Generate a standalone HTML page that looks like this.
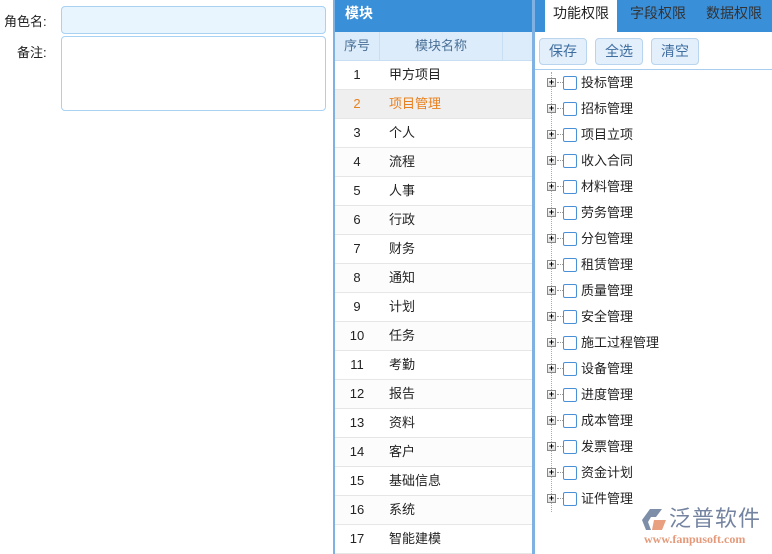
<!DOCTYPE html>
<html><head><meta charset="utf-8"><style>
*{margin:0;padding:0;box-sizing:border-box}
body{width:772px;height:554px;overflow:hidden;background:#fff;font-family:"Liberation Sans","Noto Sans CJK SC",sans-serif;font-size:13px;color:#222;position:relative}
.abs{position:absolute}
.lbl{position:absolute;font-size:13px;color:#222}
.row{position:absolute;left:335px;width:197px;height:29px;border-bottom:1px solid #e6e6e6;line-height:28px;font-size:13px}
.row .n{position:absolute;left:0;width:44px;text-align:center}
.row .t{position:absolute;left:54px}
.btn{position:absolute;top:38px;height:27px;border:1px solid #b8d4ee;border-radius:4px;background:#e3effb;color:#3e6da0;font-size:14px;line-height:25px;text-align:center}
.ti{position:absolute;left:547px;height:20px}
.ti .p{position:absolute;left:0;top:5px;width:9px;height:9px;border:1px solid #888;background:linear-gradient(#fff,#ddd);font-size:9px;line-height:7px;text-align:center;color:#000;font-weight:bold}
.ti .d{position:absolute;left:10px;top:9px;width:6px;border-top:1px dotted #999}
.ti .c{position:absolute;left:16px;top:3px;width:14px;height:14px;border:1px solid #4a90d6;border-radius:2px;background:#fff}
.ti .x{position:absolute;left:34px;top:0;font-size:13px;white-space:nowrap;line-height:20px}
</style></head><body>
<div class="lbl" style="left:4px;top:11px">角色名:</div>
<div class="abs" style="left:61px;top:6px;width:265px;height:28px;border:1px solid #a9d1f2;border-radius:4px;background:#e8f4fe"></div>
<div class="lbl" style="left:17px;top:42px">备注:</div>
<div class="abs" style="left:61px;top:36px;width:265px;height:75px;border:1px solid #a9d1f2;border-radius:4px;background:#fff"></div>

<div class="abs" style="left:333px;top:0;width:2px;height:554px;background:#7fb2e2"></div>
<div class="abs" style="left:532px;top:0;width:3px;height:554px;background:#7fb2e2"></div>
<div class="abs" style="left:335px;top:0;width:197px;height:32px;background:#3a8fd9;color:#fff;font-weight:bold;font-size:14px;line-height:26px;padding-left:10px">模块</div>
<div class="abs" style="left:335px;top:32px;width:197px;height:29px;background:#dcecfa;border-bottom:1px solid #c8def2;color:#4a6f96;font-size:13px;line-height:28px">
<span class="abs" style="left:0;width:44px;text-align:center">序号</span>
<span class="abs" style="left:44px;top:0;width:1px;height:28px;background:#c8def2"></span>
<span class="abs" style="left:45px;width:122px;text-align:center">模块名称</span>
<span class="abs" style="left:167px;top:0;width:1px;height:28px;background:#c8def2"></span>
</div>

<div class="row" style="top:61px"><span class="n">1</span><span class="t">甲方项目</span></div>
<div class="row" style="top:90px;background:#efefef;color:#e8801e"><span class="n">2</span><span class="t">项目管理</span></div>
<div class="row" style="top:119px"><span class="n">3</span><span class="t">个人</span></div>
<div class="row" style="top:148px;background:#fcfcfc"><span class="n">4</span><span class="t">流程</span></div>
<div class="row" style="top:177px"><span class="n">5</span><span class="t">人事</span></div>
<div class="row" style="top:206px;background:#fcfcfc"><span class="n">6</span><span class="t">行政</span></div>
<div class="row" style="top:235px"><span class="n">7</span><span class="t">财务</span></div>
<div class="row" style="top:264px;background:#fcfcfc"><span class="n">8</span><span class="t">通知</span></div>
<div class="row" style="top:293px"><span class="n">9</span><span class="t">计划</span></div>
<div class="row" style="top:322px;background:#fcfcfc"><span class="n">10</span><span class="t">任务</span></div>
<div class="row" style="top:351px"><span class="n">11</span><span class="t">考勤</span></div>
<div class="row" style="top:380px;background:#fcfcfc"><span class="n">12</span><span class="t">报告</span></div>
<div class="row" style="top:409px"><span class="n">13</span><span class="t">资料</span></div>
<div class="row" style="top:438px;background:#fcfcfc"><span class="n">14</span><span class="t">客户</span></div>
<div class="row" style="top:467px"><span class="n">15</span><span class="t">基础信息</span></div>
<div class="row" style="top:496px;background:#fcfcfc"><span class="n">16</span><span class="t">系统</span></div>
<div class="row" style="top:525px"><span class="n">17</span><span class="t">智能建模</span></div>

<div class="abs" style="left:535px;top:0;width:237px;height:32px;background:#3a8fd9"></div>
<div class="abs" style="left:545px;top:0;width:72px;height:32px;background:#fff;color:#222;font-size:14px;text-align:center;line-height:26px">功能权限</div>
<div class="abs" style="left:630px;top:0;color:#333;font-size:14px;line-height:26px">字段权限</div>
<div class="abs" style="left:706px;top:0;color:#333;font-size:14px;line-height:26px">数据权限</div>
<div class="abs" style="left:535px;top:32px;width:237px;height:38px;background:#fff;border-bottom:1px solid #a9cdee"></div>
<div class="btn" style="left:539px;width:48px">保存</div>
<div class="btn" style="left:595px;width:48px">全选</div>
<div class="btn" style="left:651px;width:48px">清空</div>
<div class="abs" style="left:551px;top:72px;height:440px;border-left:1px dotted #aaa"></div>

<div class="ti" style="top:73px"><span class="p">+</span><span class="d"></span><span class="c"></span><span class="x">投标管理</span></div>
<div class="ti" style="top:99px"><span class="p">+</span><span class="d"></span><span class="c"></span><span class="x">招标管理</span></div>
<div class="ti" style="top:125px"><span class="p">+</span><span class="d"></span><span class="c"></span><span class="x">项目立项</span></div>
<div class="ti" style="top:151px"><span class="p">+</span><span class="d"></span><span class="c"></span><span class="x">收入合同</span></div>
<div class="ti" style="top:177px"><span class="p">+</span><span class="d"></span><span class="c"></span><span class="x">材料管理</span></div>
<div class="ti" style="top:203px"><span class="p">+</span><span class="d"></span><span class="c"></span><span class="x">劳务管理</span></div>
<div class="ti" style="top:229px"><span class="p">+</span><span class="d"></span><span class="c"></span><span class="x">分包管理</span></div>
<div class="ti" style="top:255px"><span class="p">+</span><span class="d"></span><span class="c"></span><span class="x">租赁管理</span></div>
<div class="ti" style="top:281px"><span class="p">+</span><span class="d"></span><span class="c"></span><span class="x">质量管理</span></div>
<div class="ti" style="top:307px"><span class="p">+</span><span class="d"></span><span class="c"></span><span class="x">安全管理</span></div>
<div class="ti" style="top:333px"><span class="p">+</span><span class="d"></span><span class="c"></span><span class="x">施工过程管理</span></div>
<div class="ti" style="top:359px"><span class="p">+</span><span class="d"></span><span class="c"></span><span class="x">设备管理</span></div>
<div class="ti" style="top:385px"><span class="p">+</span><span class="d"></span><span class="c"></span><span class="x">进度管理</span></div>
<div class="ti" style="top:411px"><span class="p">+</span><span class="d"></span><span class="c"></span><span class="x">成本管理</span></div>
<div class="ti" style="top:437px"><span class="p">+</span><span class="d"></span><span class="c"></span><span class="x">发票管理</span></div>
<div class="ti" style="top:463px"><span class="p">+</span><span class="d"></span><span class="c"></span><span class="x">资金计划</span></div>
<div class="ti" style="top:489px"><span class="p">+</span><span class="d"></span><span class="c"></span><span class="x">证件管理</span></div>

<svg class="abs" style="left:642px;top:508px" width="28" height="24" viewBox="0 0 28 24">
<path d="M8 1 H20 L14 9 H9 L6 14 L9 22 H4 L0 12 Z" fill="#7d8fa8"/>
<path d="M12 12 H24 L20 22 H10 Z" fill="#e8a080"/>
</svg>
<div class="abs" style="left:669px;top:505px;font-size:22px;color:#7383a0;letter-spacing:1px;line-height:28px">泛普软件</div>
<div class="abs" style="left:644px;top:532px;font-size:12px;color:#e49a7a;font-family:'Liberation Serif',serif;line-height:14px;font-weight:bold">www.fanpusoft.com</div>
</body></html>
